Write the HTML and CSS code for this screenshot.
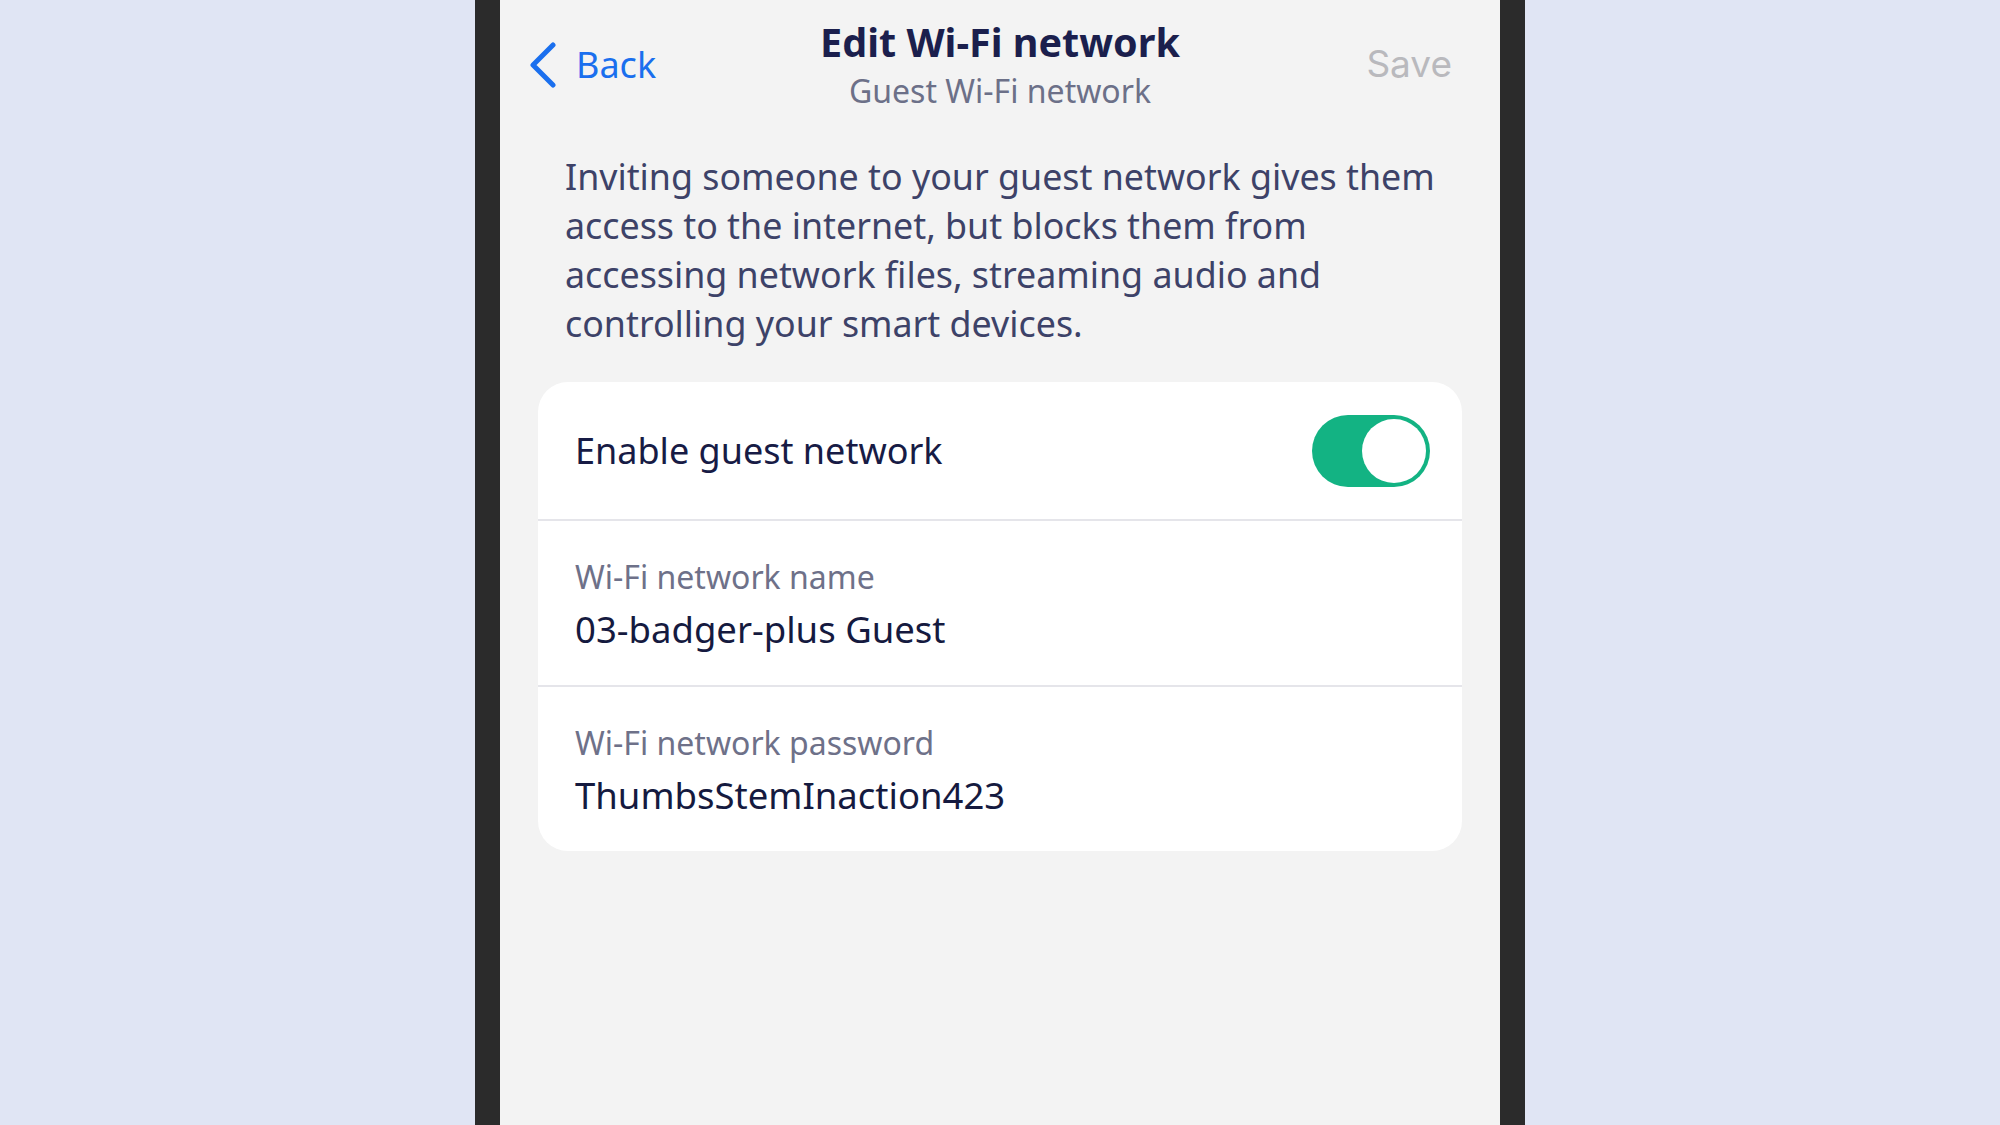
FILE: index.html
```html
<!DOCTYPE html>
<html lang="en">
<head>
    <meta charset="UTF-8">
    <meta name="viewport" content="width=device-width, initial-scale=1.0">
    <title>Edit Wi-Fi network</title>
    <link rel="stylesheet" href="styles.css">
</head>
<body>
    <div class="phone">
        <header class="nav">
            <a class="back" href="#">
                <svg class="chevron" width="30" height="46" viewBox="0 0 30 46">
                    <path d="M25 3 L5 23 L25 43" fill="none" stroke="#1a6fee" stroke-width="5" stroke-linecap="round" stroke-linejoin="round"/>
                </svg>
                <span>Back</span>
            </a>
            <div class="nav-title">
                <h1>Edit Wi-Fi network</h1>
                <p>Guest Wi-Fi network</p>
            </div>
            <span class="save">Save</span>
        </header>

        <main>
            <p class="intro">Inviting someone to your guest network gives them access to the internet, but blocks them from accessing network files, streaming audio and controlling your smart devices.</p>

            <section class="card">
                <div class="row row-toggle">
                    <span class="row-label">Enable guest network</span>
                    <span class="toggle on"><span class="knob"></span></span>
                </div>
                <div class="row row-field">
                    <span class="field-label">Wi-Fi network name</span>
                    <span class="field-value">03-badger-plus Guest</span>
                </div>
                <div class="row row-field">
                    <span class="field-label">Wi-Fi network password</span>
                    <span class="field-value">ThumbsStemInaction423</span>
                </div>
            </section>
        </main>
    </div>
</body>
</html>
```

FILE: styles.css
```css
body {
    margin: 0;
    padding: 0;
    background-color: #e0e5f4;
    font-family: "Noto Sans", Lato, sans-serif;
    display: flex;
    justify-content: center;
    height: 1125px;
    overflow: hidden;
}

.phone {
    width: 1000px;
    height: 1125px;
    background-color: #f3f3f3;
    border-left: 25px solid #2b2b2b;
    border-right: 25px solid #2b2b2b;
}

/* top bar */
.nav {
    display: grid;
    grid-template-columns: 1fr auto 1fr;
    align-items: start;
    padding: 0 28px;
    height: 132px;
}

.back {
    display: flex;
    align-items: center;
    gap: 18px;
    color: #1a6fee;
    text-decoration: none;
    font-size: 36px;
    margin-top: 40px;
}

.chevron {
    display: block;
}

.nav-title {
    text-align: center;
    padding-top: 20px;
}

.nav-title h1 {
    margin: 0;
    font-size: 39.5px;
    font-weight: 700;
    color: #1b1f4d;
    line-height: 44px;
}

.nav-title p {
    margin: 9px 0 0;
    font-size: 32px;
    color: #6c7088;
    line-height: 36px;
}

.save {
    justify-self: end;
    font-family: Inter, Roboto, sans-serif;
    font-size: 37px;
    color: #b9b9bd;
    margin: 41px 20px 0 0;
}

main {
    padding: 0 38px;
}

.intro {
    margin: 20px 0 34px 27px;
    font-size: 35.8px;
    line-height: 49px;
    color: #3d4268;
}

/* settings card */
.card {
    background-color: #fff;
    border-radius: 30px;
    overflow: hidden;
}

.row {
    padding: 0 32px 0 37px;
    border-bottom: 2px solid #e5e5ea;
}

.row:last-child {
    border-bottom: none;
}

.row-toggle {
    height: 137px;
    display: flex;
    align-items: center;
    justify-content: space-between;
}

.row-label {
    font-size: 36px;
    color: #171b45;
}

.toggle {
    width: 118px;
    height: 72px;
    border-radius: 36px;
    background-color: #e2e2e6;
    display: flex;
    align-items: center;
    padding: 0 4px;
    box-sizing: border-box;
}

.toggle.on {
    background-color: #13b383;
    justify-content: flex-end;
}

.knob {
    width: 64px;
    height: 64px;
    border-radius: 50%;
    background-color: #fff;
}

.row-field {
    height: 164px;
    display: flex;
    flex-direction: column;
    justify-content: center;
    gap: 13px;
}

.field-label {
    font-size: 32px;
    color: #6e7189;
    line-height: 38px;
}

.field-value {
    font-size: 36.5px;
    color: #151a3f;
    line-height: 40px;
}
```
